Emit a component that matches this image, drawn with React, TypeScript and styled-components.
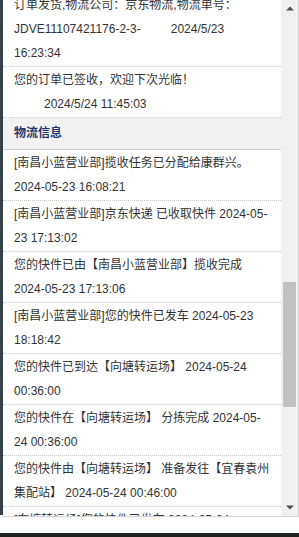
import React from "react";
import styled, { createGlobalStyle } from "styled-components";

const Global = createGlobalStyle`
  html, body { margin: 0; padding: 0; background: #ffffff; }
  body { width: 299px; height: 537px; overflow: hidden; }
`;

const Page = styled.div`
  width: 299px;
  height: 537px;
  display: flex;
  flex-direction: column;
  font-family: "Liberation Sans", "Noto Sans CJK SC", sans-serif;
  font-size: 12px;
  color: #333333;
`;

const Frame = styled.div`
  display: flex;
  height: 517px;
  flex: none;
`;

const SideStrip = styled.div`
  width: 3px;
  flex: none;
  background: #36434b;
  height: 515px;
`;

const Viewport = styled.div`
  flex: 1;
  display: flex;
  border-right: 1px solid #d4d4d4;
  border-bottom: 1px solid #d4d4d4;
  min-width: 0;
`;

const Scroller = styled.div`
  flex: 1;
  overflow: hidden;
  min-width: 0;
`;

const Content = styled.div<{ $offset: number }>`
  margin-top: ${(p) => -p.$offset}px;
`;

const Item = styled.div`
  padding: 1px 10px 1px 11px;
  line-height: 24px;
  border-bottom: 1px dotted #c8c8c8;
`;

const Time = styled.span`
  margin-left: 30px;
`;

const SectionHeader = styled.div`
  height: 31px;
  line-height: 31px;
  padding-left: 11px;
  background: #f2f2f2;
  border-bottom: 1px solid #d0d0d0;
  font-weight: bold;
  font-size: 12px;
  color: #22376f;
`;

const Scrollbar = styled.div`
  width: 17px;
  flex: none;
  background: #f1f1f1;
  display: flex;
  flex-direction: column;
`;

const ArrowButton = styled.div`
  height: 17px;
  flex: none;
  display: flex;
  align-items: center;
  justify-content: center;
`;

const Track = styled.div`
  flex: 1;
  display: flex;
  flex-direction: column;
  align-items: center;
`;

const Thumb = styled.div<{ $top: number; $height: number }>`
  width: 13px;
  margin-top: ${(p) => p.$top}px;
  height: ${(p) => p.$height}px;
  background: #c1c1c1;
`;

const BottomGap = styled.div`
  height: 16px;
  flex: none;
  background: #ffffff;
`;

const BottomBar = styled.div`
  flex: 1;
  background: #1e231f;
`;

const Arrow = ({ up }: { up?: boolean }) => (
  <svg width="8" height="5" viewBox="0 0 8 5">
    <polygon points={up ? "0,4.5 8,4.5 4,0.5" : "0,0.5 8,0.5 4,4.5"} fill="#505050" />
  </svg>
);

const orders = [
  { text: "订单发货,物流公司：京东物流,物流单号：JDVE11107421176-2-3-", time: "2024/5/23 16:23:34" },
  { text: "您的订单已签收，欢迎下次光临！", time: "2024/5/24 11:45:03" },
];

const tracks = [
  "[南昌小蓝营业部]揽收任务已分配给康群兴。 2024-05-23 16:08:21",
  "[南昌小蓝营业部]京东快递 已收取快件 2024-05-23 17:13:02",
  "您的快件已由【南昌小蓝营业部】揽收完成 2024-05-23 17:13:06",
  "[南昌小蓝营业部]您的快件已发车 2024-05-23 18:18:42",
  "您的快件已到达【向塘转运场】 2024-05-24 00:36:00",
  "您的快件在【向塘转运场】 分拣完成 2024-05-24 00:36:00",
  "您的快件由【向塘转运场】 准备发往【宜春袁州集配站】 2024-05-24 00:46:00",
  "[向塘转运场]您的快件已发车 2024-05-24 02:12:00",
];

export default function App() {
  return (
    <Page>
      <Global />
      <Frame>
        <SideStrip />
        <Viewport>
          <Scroller>
            <Content $offset={8}>
              {orders.map((o, i) => (
                <Item key={i}>
                  {o.text}
                  <Time>{o.time}</Time>
                </Item>
              ))}
              <SectionHeader>物流信息</SectionHeader>
              {tracks.map((t, i) => (
                <Item key={i}>{t}</Item>
              ))}
            </Content>
          </Scroller>
          <Scrollbar>
            <ArrowButton>
              <Arrow up />
            </ArrowButton>
            <Track>
              <Thumb $top={265} $height={125} />
            </Track>
            <ArrowButton>
              <Arrow />
            </ArrowButton>
          </Scrollbar>
        </Viewport>
      </Frame>
      <BottomGap />
      <BottomBar />
    </Page>
  );
}
